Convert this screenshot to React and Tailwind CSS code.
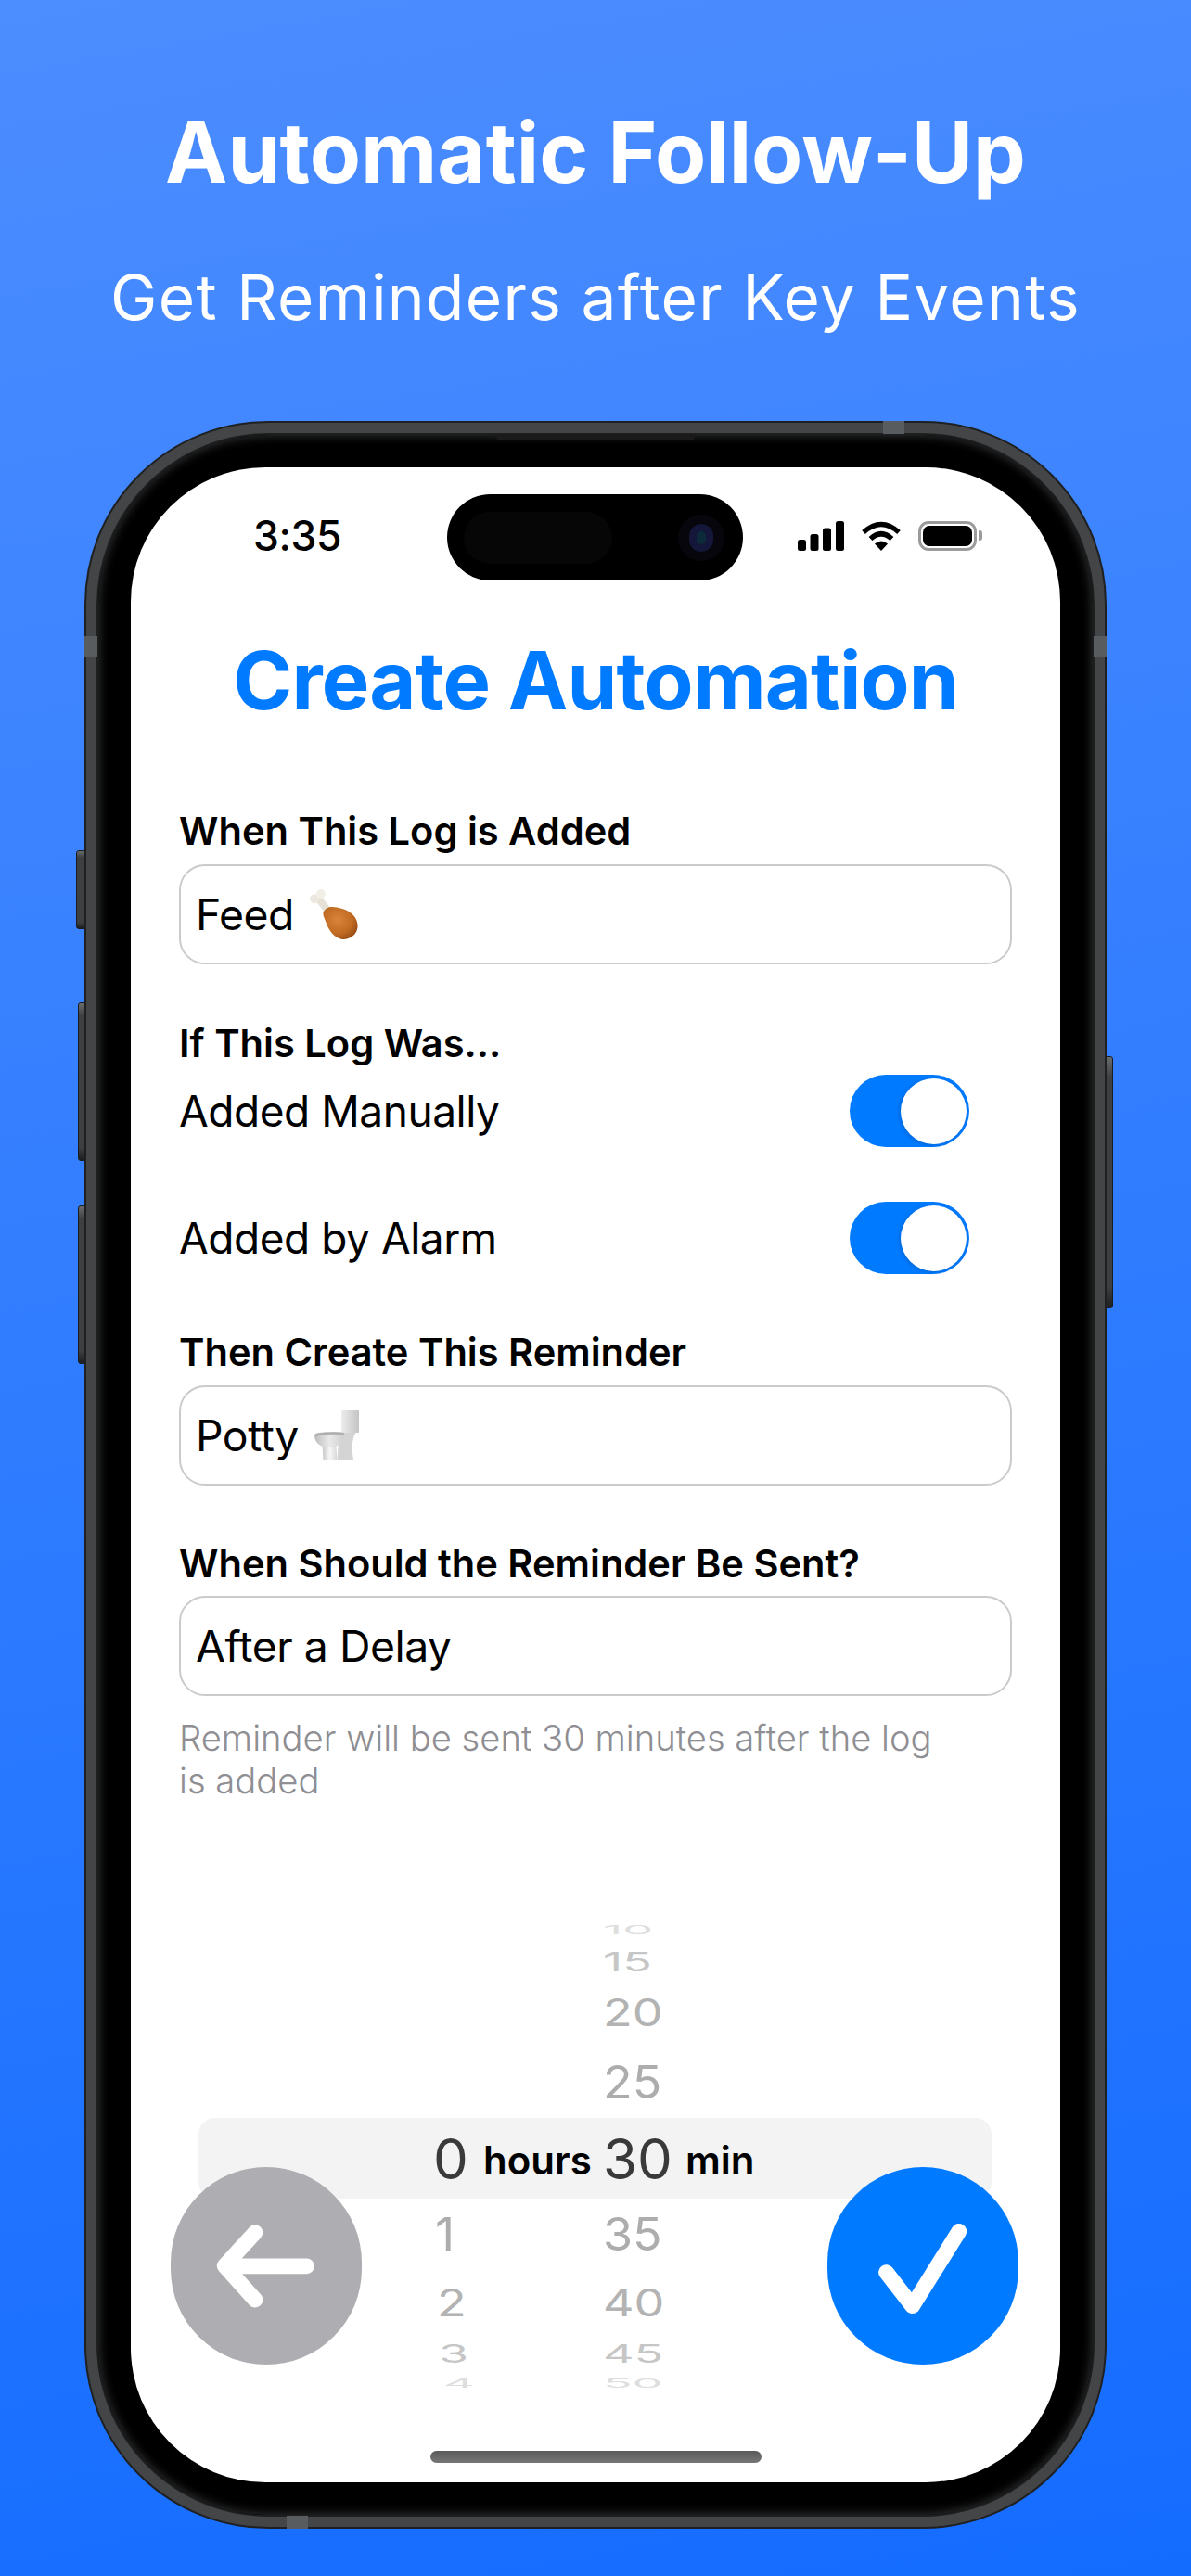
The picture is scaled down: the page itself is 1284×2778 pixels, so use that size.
import React from "react";

const font = "font-['Inter',sans-serif]";

function Drumstick() {
  return (
    <svg width="52" height="54" viewBox="45 25 155 162" className="shrink-0">
      <defs>
        <radialGradient id="meat" cx="0.42" cy="0.4" r="0.72">
          <stop offset="0" stopColor="#d9843a" />
          <stop offset="0.6" stopColor="#c06a22" />
          <stop offset="1" stopColor="#8e4312" />
        </radialGradient>
      </defs>
      <path d="M72 55 L108 100" stroke="#e6e1d6" strokeWidth="24" strokeLinecap="round" />
      <circle cx="60" cy="56" r="15" fill="#ece8df" />
      <circle cx="80" cy="40" r="15" fill="#f1eee6" />
      <path d="M89 98 C100 76 122 80 150 88 C180 97 202 120 199 148 C196 176 168 190 146 186 C122 181 104 154 97 132 C92 118 85 108 89 98 Z" fill="url(#meat)" />
    </svg>
  );
}

function Toilet() {
  return (
    <svg width="48" height="54" viewBox="38 18 144 162" className="shrink-0">
      <defs>
        <linearGradient id="tank" x1="0" x2="1" y1="0" y2="0">
          <stop offset="0" stopColor="#ececec" />
          <stop offset="1" stopColor="#c4c4c4" />
        </linearGradient>
        <linearGradient id="bowl" x1="0" x2="1" y1="0" y2="0">
          <stop offset="0" stopColor="#bdbdbd" />
          <stop offset="0.5" stopColor="#e9e9e9" />
          <stop offset="1" stopColor="#cfcfcf" />
        </linearGradient>
        <linearGradient id="stand" x1="0" x2="1" y1="0" y2="0">
          <stop offset="0" stopColor="#c9c9c9" />
          <stop offset="0.5" stopColor="#f7f7f7" />
          <stop offset="1" stopColor="#d6d6d6" />
        </linearGradient>
      </defs>
      <rect x="125" y="18" width="57" height="72" rx="3" fill="url(#tank)" />
      <path d="M128 90 H172 C158 110 158 150 165 180 H112 L116 110 Z" fill="#d4d4d4" />
      <path d="M64 130 H108 L112 180 H66 Z" fill="url(#stand)" />
      <path d="M38 98 C40 88 70 86 134 90 C134 108 122 134 100 136 H72 C52 134 38 118 38 98 Z" fill="url(#bowl)" />
      <path d="M40 96 C60 86 110 86 134 90 L132 99 C100 93 60 95 41 103 Z" fill="#aeaeae" />
    </svg>
  );
}

function Label({ children, className = "" }) {
  return (
    <div className={`h-[50px] leading-[50px] text-[41.6px] font-semibold text-black ${className}`}>{children}</div>
  );
}

function Field({ children, className = "" }) {
  return (
    <div className={`h-[108px] rounded-[28px] border-2 border-[#cbcbcb] flex items-center pl-[16px] gap-[17px] text-[46.3px] text-black tracking-[-0.01em] ${className}`}>
      {children}
    </div>
  );
}

function Toggle() {
  return (
    <div className="w-[129px] h-[78px] rounded-full bg-[#007aff] flex items-center justify-end pr-[3px]">
      <div className="w-[71px] h-[71px] rounded-full bg-white shadow-[-1px_1px_4px_rgba(0,0,0,0.18)]" />
    </div>
  );
}

function ToggleRow({ label, className = "" }) {
  return (
    <div className={`h-[78px] flex items-center justify-between pr-[46px] text-[46px] tracking-[-0.01em] text-black ${className}`}>
      <span>{label}</span>
      <Toggle />
    </div>
  );
}

const rows = [
  { h: "", m: "10", cls: "h-[16px] text-[#dedede]", digit: "scale-y-[0.26]", hcls: "" },
  { h: "", m: "15", cls: "h-[54px] text-[#c6c6c6]", digit: "scale-y-[0.55]", hcls: "" },
  { h: "", m: "20", cls: "h-[56px] text-[#b3b3b3]", digit: "scale-y-[0.8]", hcls: "" },
  { h: "", m: "25", cls: "h-[85px] pt-[8px] text-[#adadad]", digit: "scale-y-[0.95]", hcls: "" },
];
const rowsBelow = [
  { h: "1", m: "35", cls: "h-[78px] text-[#adadad]", digit: "scale-y-[0.95]", hcls: "" },
  { h: "2", m: "40", cls: "h-[70px] text-[#b3b3b3]", digit: "scale-y-[0.8]", hcls: "pl-[2px]" },
  { h: "3", m: "45", cls: "h-[38px] text-[#c6c6c6]", digit: "scale-y-[0.53]", hcls: "pl-[4px]" },
  { h: "4", m: "50", cls: "h-[28px] text-[#dedede]", digit: "scale-y-[0.24]", hcls: "pl-[9px]" },
];

function PickerRow({ r }) {
  return (
    <div className={`grid grid-cols-[276px_181px_auto] grid-rows-[100%] items-center text-[52px] leading-none ${r.cls}`}>
      <div />
      <div className={`${r.digit} ${r.hcls} origin-center`}>{r.h}</div>
      <div className={`${r.digit} origin-center`}>{r.m}</div>
    </div>
  );
}

function StatusIcons() {
  return (
    <div className="flex items-center ml-[59px] mt-[-4px]">
      <svg width="50" height="32" viewBox="0 0 50 32" fill="#000" className="mr-[18px]">
        <rect x="0" y="20" width="9" height="12" rx="2.5" />
        <rect x="13.5" y="14" width="9" height="18" rx="2.5" />
        <rect x="27" y="7.5" width="9" height="24.5" rx="2.5" />
        <rect x="41" y="0" width="9" height="32" rx="2.5" />
      </svg>
      <svg width="44" height="32" viewBox="0 0 44 32" className="mr-[18px]">
        <path d="M3 12 Q22 -5 41 12" fill="none" stroke="#000" strokeWidth="5.5" />
        <path d="M10.5 19 Q22 8.5 33.5 19" fill="none" stroke="#000" strokeWidth="5.5" />
        <path d="M22 32 L15 24.5 Q22 18.5 29 24.5 Z" fill="#000" />
      </svg>
      <div className="w-[63px] h-[32px] rounded-[11px] border-[3px] border-[#9b9b9b] p-[2px]">
        <div className="w-full h-full rounded-[7px] bg-black" />
      </div>
      <div className="w-[4px] h-[11px] ml-[2px] rounded-r-[3px] bg-[#9b9b9b]" />
    </div>
  );
}

function Screen() {
  return (
    <div className={`relative w-[1002px] h-[2173px] rounded-[145px] bg-white overflow-hidden flex flex-col ${font}`}>
      <div className="mt-[29px] h-[93px] flex items-center pl-[132px] shrink-0">
        <div className="w-[209px] text-[44.5px] font-medium text-black leading-none tracking-[-0.01em] mt-[-3px]">3:35</div>
        <div className="relative w-[319px] h-[93px] rounded-full bg-black flex items-center pl-[18px]">
          <div className="w-[160px] h-[56px] rounded-full bg-[#060606]" />
          <div className="absolute right-[20px] top-[22px] w-[50px] h-[50px] rounded-full bg-[#07060c] flex items-center justify-center">
            <div className="w-[26px] h-[30px] rounded-full bg-[#14173a] flex items-center justify-center">
              <div className="w-[10px] h-[14px] rounded-full bg-[#0d2a3a]" />
            </div>
          </div>
        </div>
        <StatusIcons />
      </div>

      <div className="mt-[58px] h-[100px] leading-[100px] text-center text-[86.5px] font-bold text-[#007aff] tracking-[-0.01em] shrink-0">
        Create Automation
      </div>

      <div className="px-[52px] flex flex-col shrink-0">
        <Label className="mt-[87px]">When This Log is Added</Label>
        <Field className="mt-[11px]">
          <span className="mt-[2px]">Feed</span>
          <Drumstick />
        </Field>
        <Label className="mt-[60px]">If This Log Was...</Label>
        <ToggleRow label="Added Manually" className="mt-[9px]" />
        <ToggleRow label="Added by Alarm" className="mt-[59px]" />
        <Label className="mt-[59px]">Then Create This Reminder</Label>
        <Field className="mt-[11px] gap-[12px]">
          <span className="mt-[2px]">Potty</span>
          <Toilet />
        </Field>
        <Label className="mt-[59px]">When Should the Reminder Be Sent?</Label>
        <Field className="mt-[10px]">
          <span className="mt-[2px]">After a Delay</span>
        </Field>
        <div className="mt-[22px] text-[38.2px] font-light leading-[46px] text-[#8e8e93]">
          <div>Reminder will be sent 30 minutes after the log</div>
          <div>is added</div>
        </div>

        <div className="mt-[130px] flex flex-col">
          <div>
            {rows.map((r) => (
              <PickerRow key={r.m} r={r} />
            ))}
          </div>
          <div className="h-[87px] ml-[21px] mr-[22px] rounded-[18px] bg-[#f3f3f3] flex items-center pl-[253px] leading-none">
            <div className="w-[54px] text-[60px] text-[#3a3a3a]">0</div>
            <div className="w-[129px] text-[42px] font-semibold text-black mt-[4px]">hours</div>
            <div className="w-[89px] text-[60px] text-[#3a3a3a]">30</div>
            <div className="text-[42px] font-semibold text-black mt-[4px]">min</div>
          </div>
          <div>
            {rowsBelow.map((r) => (
              <PickerRow key={r.m} r={r} />
            ))}
          </div>
        </div>
      </div>

      <div className="mt-[58px] w-[357px] h-[13px] mx-auto rounded-full bg-[linear-gradient(to_bottom,#5a5a5a,#777777)] shrink-0" />

      <button className="absolute left-[43px] bottom-[127px] w-[206px] h-[213px] rounded-full bg-[#aeaeb2]">
        <svg viewBox="12 20 618 640" className="w-full h-full block">
          <path d="M452 341 H190 M285 232 L186 340 L285 450" fill="none" stroke="#fff" strokeWidth="50" strokeLinecap="round" strokeLinejoin="round" />
        </svg>
      </button>
      <button className="absolute right-[45px] bottom-[127px] w-[206px] h-[213px] rounded-full bg-[#007aff]">
        <svg viewBox="24 20 616 640" className="w-full h-full block">
          <path d="M213 361 L298 470 L449 228" fill="none" stroke="#fff" strokeWidth="50" strokeLinecap="round" strokeLinejoin="round" />
        </svg>
      </button>
    </div>
  );
}

function Phone() {
  const side = "absolute rounded-[3px] border border-[#1b1c1d] bg-[linear-gradient(to_bottom,#6a6c6e_0%,#3d3f41_8%,#3d3f41_92%,#1d1e1f_100%)]";
  return (
    <div className="relative w-[1102px] h-[2273px] shrink-0">
      <div className={`${side} left-[-9px] top-[463px] w-[12px] h-[85px]`} />
      <div className={`${side} left-[-7px] top-[627px] w-[10px] h-[171px]`} />
      <div className={`${side} left-[-7px] top-[846px] w-[10px] h-[171px]`} />
      <div className={`${side} right-[-7px] top-[685px] w-[10px] h-[272px]`} />

      <div className="relative w-full h-full rounded-[198px] bg-[#434547] border-[2px] border-[#1f2021] p-[11px]">
        <div className="w-full h-full rounded-[186px] border-[2px] border-[#1d1e1f] bg-black p-[35px] shadow-[inset_0_0_12px_#3a3b3c]">
          <Screen />
        </div>
      </div>

      <div className="absolute left-[861px] top-0 w-[23px] h-[14px] bg-[#585c5e]" />
      <div className="absolute left-[218px] bottom-0 w-[23px] h-[14px] bg-[#585c5e]" />
      <div className="absolute left-0 top-[232px] w-[14px] h-[23px] bg-[#585c5e]" />
      <div className="absolute right-0 top-[232px] w-[14px] h-[23px] bg-[#585c5e]" />
      <div className="absolute left-[443px] top-[14px] w-[216px] h-[7px] rounded-b-[6px] bg-[#1a1a1b]" />
    </div>
  );
}

export default function App() {
  return (
    <div className={`w-[1284px] h-[2778px] overflow-hidden flex flex-col items-center text-white bg-[linear-gradient(170deg,#4c8dff,#146cff)] ${font}`}>
      <div className="mt-[115px] h-[100px] leading-[100px] text-[90.2px] font-bold whitespace-nowrap">Automatic Follow-Up</div>
      <div className="mt-[66px] h-[80px] leading-[80px] text-[67.5px] tracking-[0.02em] whitespace-nowrap">Get Reminders after Key Events</div>
      <div className="mt-[93px]">
        <Phone />
      </div>
    </div>
  );
}
